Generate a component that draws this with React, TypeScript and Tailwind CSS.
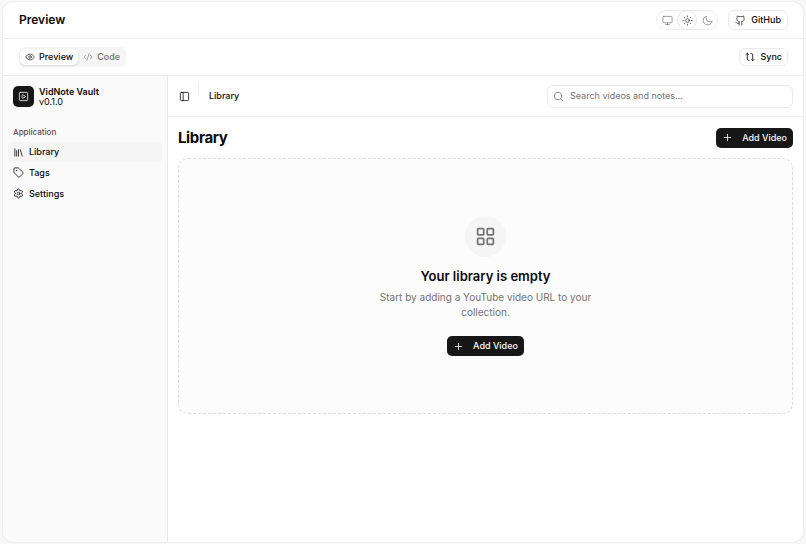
import React, { useState } from 'react';
import {
    CodeXml,
    Eye,
    Github,
    LayoutGrid,
    Library,
    Monitor,
    PanelLeft,
    Plus,
    Search,
    Settings,
    SquarePlay,
    Sun,
    Tag,
} from 'lucide-react';

function MoonIcon({ className }: { className?: string }) {
    return (
        <svg
            viewBox="0 0 24 24"
            fill="none"
            stroke="currentColor"
            strokeWidth="1.5"
            strokeLinecap="round"
            strokeLinejoin="round"
            className={className}
            aria-hidden="true"
        >
            <path d="M21.5 14.08c-1.2.64-2.57 1-4.02 1a8.56 8.56 0 0 1-8.56-8.56c0-1.45.36-2.82 1-4.02A9.63 9.63 0 1 0 21.5 14.08Z" />
        </svg>
    );
}

function SyncIcon() {
    return (
        <svg
            viewBox="0 0 24 24"
            fill="none"
            stroke="currentColor"
            strokeWidth="2"
            strokeLinecap="round"
            strokeLinejoin="round"
            className="size-[10px]"
            aria-hidden="true"
        >
            <path d="M2.5 6 5.5 3l3 3" />
            <path d="M5.5 3v14a3 3 0 0 0 3 3H10" />
            <path d="m21.5 18-3 3-3-3" />
            <path d="M18.5 21V7a3 3 0 0 0-3-3H14" />
        </svg>
    );
}

const navItems = [
    { label: 'Library', icon: Library },
    { label: 'Tags', icon: Tag },
    { label: 'Settings', icon: Settings },
];

const themes = [
    { label: 'System', icon: Monitor },
    { label: 'Light', icon: Sun },
    { label: 'Dark', icon: MoonIcon },
];

const tabs = [
    { label: 'Preview', icon: Eye },
    { label: 'Code', icon: CodeXml },
];

function AddVideoButton() {
    return (
        <button className="flex h-5 items-center gap-[9px] rounded-[5px] bg-[#171717] px-[6px] text-[9px] font-medium text-neutral-50">
            <Plus className="size-[11px]" strokeWidth={1.75} />
            Add Video
        </button>
    );
}

export default function App() {
    const [theme, setTheme] = useState('Light');
    const [tab, setTab] = useState('Preview');
    const [page, setPage] = useState('Library');
    const [query, setQuery] = useState('');

    return (
        <div className="flex h-screen flex-col bg-[#f8f8f8] px-[3px] py-[2px] font-['Inter',sans-serif] text-[9px] text-neutral-950">
            <div className="flex flex-1 flex-col overflow-hidden rounded-[10px] bg-white shadow-[0_0_2px_rgba(0,0,0,0.14)]">
                <header className="flex h-[37px] items-center justify-between border-b border-neutral-200/80 pr-[15px] pl-4">
                    <h1 className="text-[12px] font-semibold">Preview</h1>
                    <div className="flex items-center gap-[10px]">
                        <div className="flex h-5 items-center rounded-full border border-neutral-200/70">
                            {themes.map(({ label, icon: Icon }) => (
                                <button
                                    key={label}
                                    aria-label={label}
                                    onClick={() => setTheme(label)}
                                    className={
                                        theme === label
                                            ? 'flex size-5 items-center justify-center rounded-full border border-neutral-200 text-neutral-800'
                                            : 'flex size-5 items-center justify-center rounded-full text-neutral-500'
                                    }
                                >
                                    <Icon className="size-[11px]" strokeWidth={1.5} />
                                </button>
                            ))}
                        </div>
                        <a
                            href="#github"
                            className="flex h-5 items-center gap-[5px] rounded-md border border-neutral-200/80 px-[6px] font-medium"
                        >
                            <Github className="size-[11px]" strokeWidth={1.5} />
                            GitHub
                        </a>
                    </div>
                </header>

                <div className="flex h-[37px] items-center justify-between border-b border-neutral-200/80 pr-[15px] pl-4">
                    <div className="flex h-5 items-center rounded-md bg-neutral-100 p-px">
                        {tabs.map(({ label, icon: Icon }) => (
                            <button
                                key={label}
                                onClick={() => setTab(label)}
                                className={
                                    tab === label
                                        ? 'flex h-4 items-center gap-1 rounded-[5px] bg-white px-[5px] font-medium shadow-sm'
                                        : 'flex h-4 items-center gap-1 rounded-[5px] px-[5px] font-medium text-neutral-500'
                                }
                            >
                                <Icon className="size-[10px]" strokeWidth={1.5} />
                                {label}
                            </button>
                        ))}
                    </div>
                    <button className="flex h-[18px] items-center gap-[5px] rounded-md border border-neutral-200/80 px-[5px] font-medium">
                        <SyncIcon />
                        Sync
                    </button>
                </div>

                <div className="flex flex-1">
                    <aside className="w-[165px] shrink-0 border-r border-neutral-200/80 bg-[#fafafa] px-[5px] pt-[10px]">
                        <div className="flex items-center gap-[5px] px-[5px]">
                            <div className="flex size-[21px] items-center justify-center rounded-[5px] bg-[#171717] text-neutral-50">
                                <SquarePlay className="size-[11px]" strokeWidth={1.75} />
                            </div>
                            <div className="leading-[10px]">
                                <p className="font-semibold">VidNote Vault</p>
                                <p>v0.1.0</p>
                            </div>
                        </div>
                        <h2 className="mt-[15px] flex h-5 items-center px-[5px] text-[8px] font-medium text-neutral-600">
                            Application
                        </h2>
                        <nav className="flex flex-col">
                            {navItems.map(({ label, icon: Icon }) => (
                                <a
                                    key={label}
                                    href={'#' + label.toLowerCase()}
                                    onClick={() => setPage(label)}
                                    className={
                                        page === label
                                            ? 'flex h-5 items-center gap-[5px] rounded-[4px] bg-neutral-100 px-[5px] font-medium'
                                            : 'flex h-[21px] items-center gap-[5px] rounded-[4px] px-[5px] font-medium'
                                    }
                                >
                                    <Icon className="size-[11px]" strokeWidth={1.75} />
                                    {label}
                                </a>
                            ))}
                        </nav>
                    </aside>

                    <main className="flex min-w-0 flex-1 flex-col">
                        <div className="flex h-[41px] items-center border-b border-neutral-200/80 pr-[10px] pl-[11px]">
                            <button aria-label="Toggle sidebar" className="flex items-center">
                                <PanelLeft className="size-[11px]" strokeWidth={1.75} />
                            </button>
                            <div className="mt-2 ml-[8px] h-[11px] w-px self-start bg-neutral-200/80" />
                            <span className="ml-[10px] font-medium">Library</span>
                            <label className="ml-auto flex h-[23px] w-[246px] items-center gap-[6px] rounded-md border border-neutral-200/80 px-[5px]">
                                <Search className="size-[11px] text-neutral-500" strokeWidth={1.75} />
                                <input
                                    type="text"
                                    aria-label="Search videos and notes"
                                    value={query}
                                    onChange={(e) => setQuery(e.target.value)}
                                    placeholder="Search videos and notes..."
                                    className="min-w-0 flex-1 outline-none placeholder:text-neutral-500"
                                />
                            </label>
                        </div>

                        <div className="flex flex-col gap-[10px] px-[10px] pt-[10px]">
                            <div className="flex items-center justify-between">
                                <h2 className="text-[15px] leading-[21px] font-bold tracking-tight">Library</h2>
                                <AddVideoButton />
                            </div>
                            <section className="flex min-h-64 flex-col items-center justify-center rounded-[10px] border border-dashed border-neutral-300/80 bg-[#fcfcfc]">
                                <div className="flex size-[41px] items-center justify-center rounded-full bg-neutral-100">
                                    <LayoutGrid className="size-[21px] text-neutral-500" />
                                </div>
                                <h3 className="mt-[10px] text-[13px] leading-[18px] font-semibold">Your library is empty</h3>
                                <p className="mt-[5px] max-w-60 text-center text-[10px] leading-[15px] text-neutral-500">
                                    Start by adding a YouTube video URL to your collection.
                                </p>
                                <div className="mt-4">
                                    <AddVideoButton />
                                </div>
                            </section>
                        </div>
                    </main>
                </div>
            </div>
        </div>
    );
}
